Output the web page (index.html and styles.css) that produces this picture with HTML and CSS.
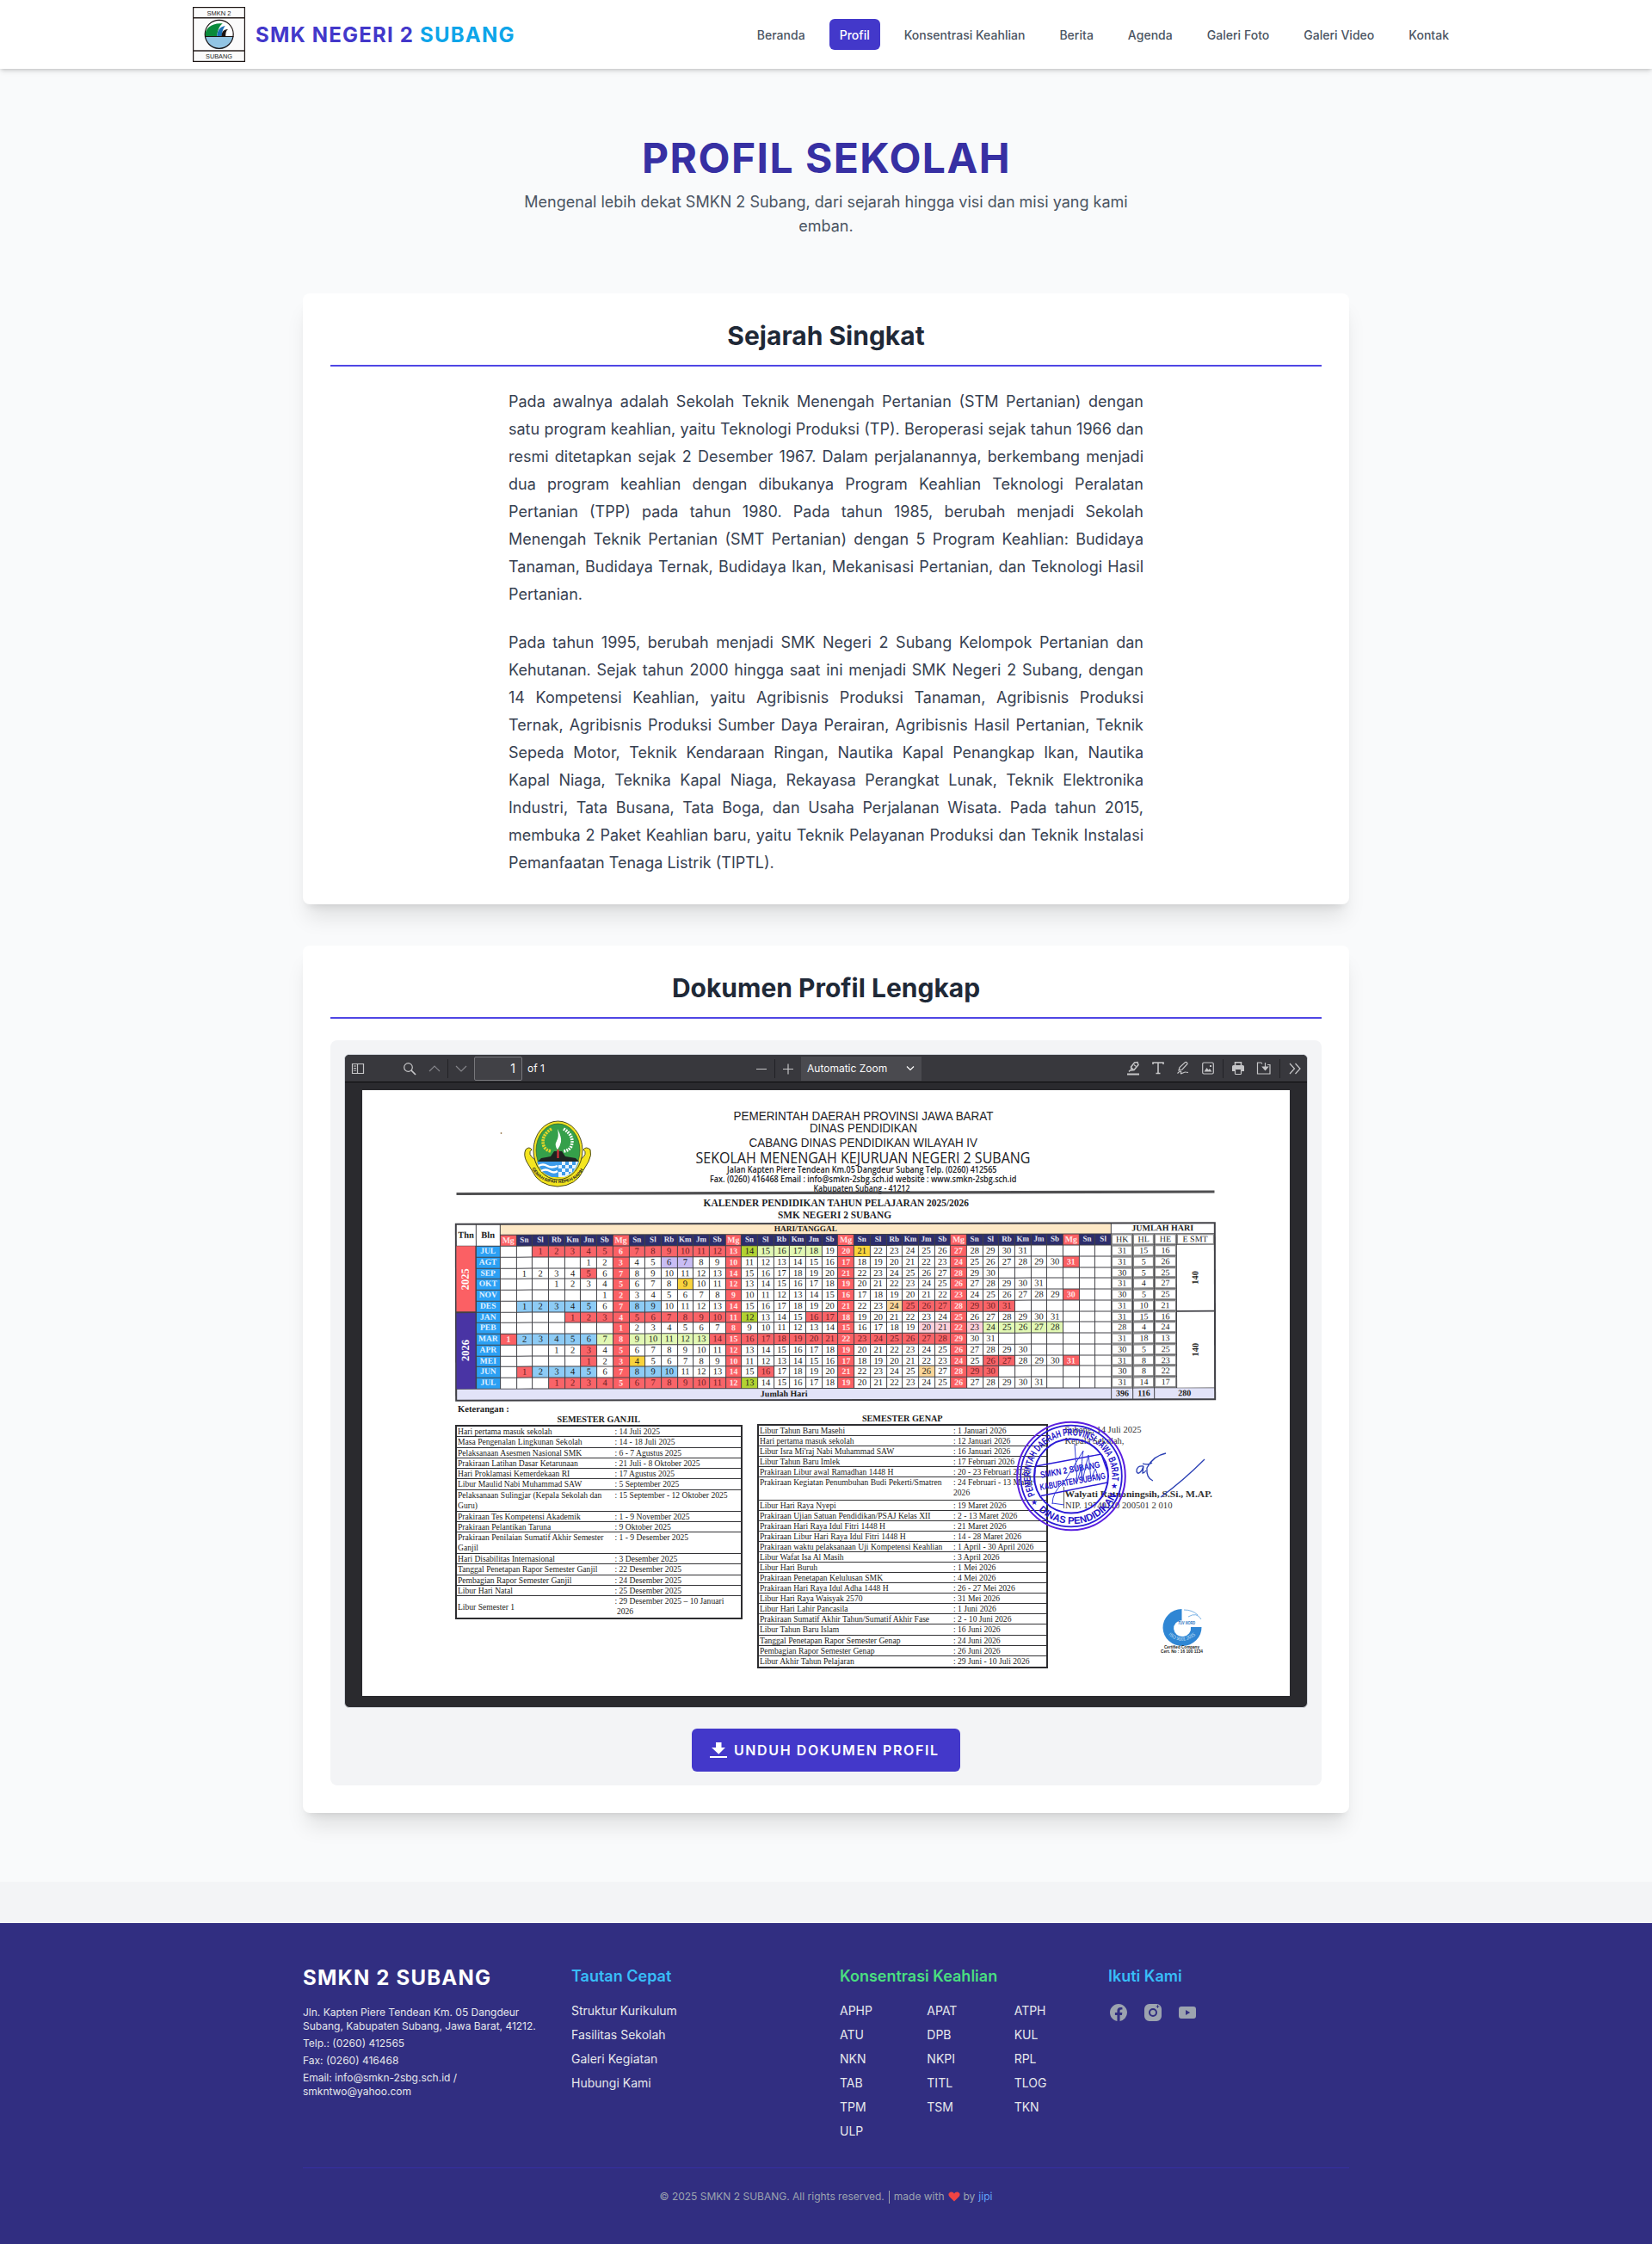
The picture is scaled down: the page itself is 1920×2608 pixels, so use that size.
FILE: index.html
```html
<!DOCTYPE html>
<html lang="id">
<head>
<meta charset="utf-8">
<title>Profil Sekolah - SMK Negeri 2 Subang</title>
<link rel="stylesheet" href="styles.css">
</head>
<body>
<header class="site-header">
  <div class="header-inner">
    <a class="brand">
      <svg class="brand-logo" viewBox="0 0 61 64">
        <rect x=".6" y=".6" width="59.8" height="62.8" fill="#fbfbfb" stroke="#1c1413" stroke-width="1.2"/>
        <path d="M0 12.8H61M0 51H61" stroke="#2a2220" stroke-width="1.4"/>
        <circle cx="30.7" cy="31.8" r="16.5" fill="#fff"/>
        <path d="M14.3 34.5a16.5 16.5 0 0 0 32.8 0z" fill="#92c5e4"/>
        <path d="M14.3 34.5c-.6-9 7-16 20.5-15.2-4 3-6.4 8.500-6.600 15.200z" fill="#0a8a3a"/>
        <path d="M28.200 34.500c.1-6 2.500-11.500 9.500-12.500-2.500 3-3.800 7.500-4 12.500z" fill="#1b6fb4"/>
        <path d="M33.500 34.500c.2-5 1.500-8.500 7.500-8.600-2.500 1.700-2.800 5-2.800 8.600z" fill="#1c1413"/>
        <path d="M14 34.500H47.400" stroke="#1c1413" stroke-width="1"/>
        <circle cx="30.700" cy="31.800" r="16.500" fill="none" stroke="#1c1413" stroke-width="1.200"/>
        <text x="30.500" y="10" text-anchor="middle" textLength="28" lengthAdjust="spacingAndGlyphs">SMKN 2</text>
        <text x="30.500" y="60" text-anchor="middle" textLength="31" lengthAdjust="spacingAndGlyphs">SUBANG</text>
      </svg>
      <span class="brand-name">SMK NEGERI 2 <span class="accent">SUBANG</span></span>
    </a>
    <nav class="main-nav">
      <a>Beranda</a><a class="active">Profil</a><a>Konsentrasi Keahlian</a><a>Berita</a><a>Agenda</a><a>Galeri Foto</a><a>Galeri Video</a><a>Kontak</a>
    </nav>
  </div>
</header>

<main class="page">
  <div class="hero">
    <h1>PROFIL SEKOLAH</h1>
    <p>Mengenal lebih dekat SMKN 2 Subang, dari sejarah hingga visi dan misi yang kami emban.</p>
  </div>

  <section class="card">
    <h2>Sejarah Singkat</h2>
    <div class="prose">
      <p>Pada awalnya adalah Sekolah Teknik Menengah Pertanian (STM Pertanian) dengan satu program keahlian, yaitu Teknologi Produksi (TP). Beroperasi sejak tahun 1966 dan resmi ditetapkan sejak 2 Desember 1967. Dalam perjalanannya, berkembang menjadi dua program keahlian dengan dibukanya Program Keahlian Teknologi Peralatan Pertanian (TPP) pada tahun 1980. Pada tahun 1985, berubah menjadi Sekolah Menengah Teknik Pertanian (SMT Pertanian) dengan 5 Program Keahlian: Budidaya Tanaman, Budidaya Ternak, Budidaya Ikan, Mekanisasi Pertanian, dan Teknologi Hasil Pertanian.</p>
      <p>Pada tahun 1995, berubah menjadi SMK Negeri 2 Subang Kelompok Pertanian dan Kehutanan. Sejak tahun 2000 hingga saat ini menjadi SMK Negeri 2 Subang, dengan 14 Kompetensi Keahlian, yaitu Agribisnis Produksi Tanaman, Agribisnis Produksi Ternak, Agribisnis Produksi Sumber Daya Perairan, Agribisnis Hasil Pertanian, Teknik Sepeda Motor, Teknik Kendaraan Ringan, Nautika Kapal Penangkap Ikan, Nautika Kapal Niaga, Teknika Kapal Niaga, Rekayasa Perangkat Lunak, Teknik Elektronika Industri, Tata Busana, Tata Boga, dan Usaha Perjalanan Wisata. Pada tahun 2015, membuka 2 Paket Keahlian baru, yaitu Teknik Pelayanan Produksi dan Teknik Instalasi Pemanfaatan Tenaga Listrik (TIPTL).</p>
    </div>
  </section>

  <section class="card">
    <h2>Dokumen Profil Lengkap</h2>
    <div class="document-box">
      <div class="viewer">
        <div class="toolbar">
          <div class="tools">
            <svg class="ic" width="16" height="16"><path d="M1.500 2.500h13v11h-13zM7.500 2.500v11" /><path d="M3 5h3M3 7.500h3M3 10h3"/></svg>
            <svg class="ic gap-search" width="16" height="16"><circle cx="6.500" cy="6.500" r="4.800"/><path d="M10 10l5 5" stroke-width="1.700"/></svg>
            <svg class="ic dim gap-s" width="14" height="16"><path d="M1 11l6-6 6 6"/></svg>
            <i class="sep"></i>
            <svg class="ic dim" width="14" height="16"><path d="M1 5l6 6 6-6"/></svg>
            <span class="page-input">1</span>
            <span class="page-total">of 1</span>
          </div>
          <div class="tools">
            <svg class="ic" width="14" height="16"><path d="M1 8.500h12"/></svg>
            <i class="sep"></i>
            <svg class="ic" width="14" height="16"><path d="M1 8.500h12M7 2.500v12"/></svg>
            <span class="zoom-select">Automatic Zoom<svg class="ic light" width="10" height="8"><path d="M1 1.500l4 4 4-4"/></svg></span>
          </div>
          <div class="tools right">
            <svg class="ic" width="16" height="17"><path d="M1 15.500h14" stroke-width="2"/><path d="M5 10.500l-2 2M5.500 7l4-5 3.500-.5 1 3-5 6-3 .5z" stroke-width="1.500"/><path d="M5.500 7.500l3 2.800M9 4.500l2.500 2"/></svg>
            <svg class="ic" width="16" height="17"><path d="M2 4V2h12v2M8 2v12.500M5.500 14.500h5" stroke-width="1.600"/></svg>
            <svg class="ic" width="16" height="17"><path d="M3 11l1-3.500L10.500 1.500q2.500-.5 2.500 2L7 10zM1.500 14.500c3-3 5-3 4-.5s4-1.500 5.500-1l3 .5"/></svg>
            <svg class="ic" width="16" height="17"><rect x="1.700" y="2" width="12.600" height="13" rx="1.500"/><path d="M3.500 12.500l3-4.500 2 2.500 1.500-1.500 2.500 3.500z" fill="#c6c6c8" stroke="none"/><rect x="10" y="5" width="2" height="2" fill="#c6c6c8" stroke="none"/></svg>
            <i class="sep"></i>
            <svg class="ic" width="16" height="17"><path d="M4.500 5V1.800h7V5" stroke-width="1.500"/><path d="M1 6.500Q1 5 2.500 5h11Q15 5 15 6.500V12h-3V9.500H4V12H1z" fill="#c6c6c8" stroke="none"/><rect x="4.500" y="9.500" width="7" height="6" rx=".8"/></svg>
            <svg class="ic" width="18" height="17"><path d="M7 3.500L5.800 2H1.500v13h14.500V4.500H13" /><path d="M10.500 2v7M7.500 7l3 3.500 3-3.500z" fill="#c6c6c8"/></svg>
            <i class="sep"></i>
            <svg class="ic" width="16" height="16"><path d="M2 2l5.500 6L2 14M8.500 2l5.500 6-5.500 6"/></svg>
          </div>
        </div>

        <div class="sheet">
          <svg class="letterhead" viewBox="421 1267 1078 155">
            <circle cx="582.500" cy="1317" r=".9" fill="#9a7b52"/>
            <g class="emblem">
              <path d="M611 1336q-3 6 1 14l6 10q8 18 30 19 22-1 30-19l6-10q4-8 2-14-5-4-8 0 6 5-4 12l-2 6q-8 16-24 16t-24-16l-2-6q-10-7-4-12-3-4-7 0z" fill="#f4e51f" stroke="#3b3a12" stroke-width=".9"/>
              <ellipse cx="648.500" cy="1337" rx="28.500" ry="34" fill="#f3e427" stroke="#3b3a12" stroke-width=".9"/>
              <ellipse cx="648.500" cy="1337" rx="25.500" ry="31" fill="#35a04a" stroke="#2c5a2a" stroke-width=".7"/>
              <path d="M624 1350h49q-4 14-17 18h-15q-13-4-17-18z" fill="#3d9be9"/>
              <path d="M626 1355q5-3 10 0t12 0M629 1361q5-3 10 0t9 0" stroke="#fff" stroke-width="2.400" fill="none"/>
              <path d="M649 1350h23l-2 5-3 6-5 4-6 3h-7z" fill="#e8f4ff"/>
              <path d="M649 1350h4v4h-4zM657 1350h4v4h-4zM665 1350h4v4h-4zM653 1354h4v4h-4zM661 1354h4v4h-4zM649 1358h4v4h-4zM657 1358h4v4h-4zM665 1358h3l-2 4h-1zM653 1362h4v4h-4zM661 1362h3l-3 3z" fill="#3d9be9"/>
              <path d="M625 1350l4-4 6-1 5-1 4-6 9 0 4 6 6 1 6 1 4 4z" fill="#1e2321"/>
              <path d="M648.500 1346v-10" stroke="#d9303a" stroke-width="2.200"/>
              <path d="M648 1336q-4-5-1-10t1-14q5 10 4 15t-4 9z" fill="#fff"/>
              <path d="M641 1312q-13 8-9 20 2 5 9 6" fill="none" stroke="#e5d62a" stroke-width="3.600" stroke-dasharray="2.200 1"/>
              <path d="M655 1312q13 8 9 20-2 5-9 6" fill="none" stroke="#fff" stroke-width="3.600" stroke-dasharray="1.800 1.200"/>
              <path id="ribbon" d="M617 1355q8 20 31.500 20t31.500-20" fill="none"/>
              <text class="ribbon-text"><textPath href="#ribbon" startOffset="3" textLength="72" lengthAdjust="spacingAndGlyphs">GEMAH RIPAH REPEH RAPIH</textPath></text>
            </g>
            <g class="lh-sans">
              <text x="852.500" y="1301.500" textLength="302" lengthAdjust="spacingAndGlyphs">PEMERINTAH DAERAH PROVINSI JAWA BARAT</text>
              <text x="941" y="1316" textLength="125" lengthAdjust="spacingAndGlyphs">DINAS PENDIDIKAN</text>
              <text x="870.500" y="1332.500" textLength="265.500" lengthAdjust="spacingAndGlyphs">CABANG DINAS PENDIDIKAN WILAYAH IV</text>
            </g>
            <g class="lh-open">
              <text class="lh-school" x="808.500" y="1352" textLength="389" lengthAdjust="spacingAndGlyphs">SEKOLAH MENENGAH KEJURUAN NEGERI 2 SUBANG</text>
              <text x="845" y="1363" textLength="313.500" lengthAdjust="spacingAndGlyphs">Jalan Kapten Piere Tendean Km.05 Dangdeur Subang Telp. (0260) 412565</text>
              <text x="825" y="1374" textLength="356.500" lengthAdjust="spacingAndGlyphs">Fax. (0260) 416468 Email : info@smkn-2sbg.sch.id website : www.smkn-2sbg.sch.id</text>
              <text x="945.500" y="1384.500" textLength="112" lengthAdjust="spacingAndGlyphs">Kabupaten Subang - 41212</text>
            </g>
            <path d="M530.500 1387.500L1411.500 1385" stroke="#505052" stroke-width="3.200"/>
            <g class="lh-serif">
              <text x="817.500" y="1402" textLength="308.500" lengthAdjust="spacingAndGlyphs">KALENDER PENDIDIKAN TAHUN PELAJARAN 2025/2026</text>
              <text x="904" y="1415.500" textLength="132" lengthAdjust="spacingAndGlyphs">SMK NEGERI 2 SUBANG</text>
            </g>
          </svg>

          <div class="calendar" id="calendar"></div>

          <div class="notes">
            <div class="notes-col odd">
              <p class="notes-label">Keterangan :</p>
              <h4>SEMESTER GANJIL</h4>
              <div class="agenda" id="odd"></div>
            </div>
            <div class="notes-col even">
              <h4>SEMESTER GENAP</h4>
              <div class="agenda" id="even"></div>
            </div>
          </div>

          <svg class="signature" viewBox="1160 1640 280 300">
            <g class="sign-text">
              <text x="1237.500" y="1665" textLength="89" lengthAdjust="spacingAndGlyphs">Subang, 14 Juli 2025</text>
              <text x="1237.500" y="1678" textLength="69" lengthAdjust="spacingAndGlyphs">Kepala Sekolah,</text>
              <text x="1237.500" y="1739.500" class="sign-name" textLength="171.500" lengthAdjust="spacingAndGlyphs">Walyati Ratnoningsih, S.Si., M.AP.</text>
              <text x="1238" y="1752.500" textLength="124.500" lengthAdjust="spacingAndGlyphs">NIP. 19740110 200501 2 010</text>
              <path d="M1236.500 1728v25" stroke="#333" stroke-width=".8"/>
            </g>
            <g class="stamp">
              <circle cx="1245" cy="1715.500" r="62.800" stroke="#5a1fe0" stroke-width="2"/>
              <circle cx="1245" cy="1715.500" r="58.800" stroke-width="1.800"/>
              <circle cx="1245" cy="1715.500" r="43" stroke-width="2"/>
              <path d="M1204 1704l76-14M1210 1738.500l77-15.500M1203 1708l-1 15M1280 1690l7 20"/>
              <path id="arc-top" d="M1204 1739A47.300 47.300 0 1 1 1291 1727" stroke="none"/>
              <path id="arc-bottom" d="M1205 1753A56 56 0 0 0 1299 1734" stroke="none"/>
              <text class="stamp-ring"><textPath href="#arc-top" startOffset="2" textLength="176" lengthAdjust="spacingAndGlyphs">PEMERINTAH DAERAH PROVINSI JAWA BARAT</textPath></text>
              <text class="stamp-ring"><textPath href="#arc-bottom" startOffset="3" textLength="108" lengthAdjust="spacingAndGlyphs">DINAS PENDIDIKAN</textPath></text>
              <text class="stamp-star" x="1198" y="1749">★</text>
              <text class="stamp-star" x="1291" y="1730">★</text>
              <g transform="rotate(-10 1245 1715.500)">
                <text class="stamp-mid" x="1210" y="1711.500" textLength="70" lengthAdjust="spacingAndGlyphs">SMKN 2 SUBANG</text>
                <text class="stamp-mid" x="1207" y="1725.500" textLength="77" lengthAdjust="spacingAndGlyphs">KABUPATEN SUBANG</text>
              </g>
              <path d="M1223 1748q0-14 14-26l22-36q-2 8-2 33M1249 1678l3 44 5-18 1 17 7-30 3 28 5-12 5 14M1223 1747l14 2" stroke="#3540d8" stroke-width="1"/>
              <path d="M1329 1704q-8-1-8 6 1 5 6-1l2-5-1 8q2 0 4-3M1355 1689q-15 3-22 17-1 12 7 15M1328 1701q7 2 11-1M1349 1740q26-19 51-44" stroke="#2a3fb4" stroke-width="1.300"/>
            </g>
            <g>
              <path d="M1373.500 1870A22.500 21.500 0 1 0 1396.500 1891L1384 1891A10 9.500 0 1 1 1373.500 1883Z" fill="#2f86d4"/>
              <path d="M1381 1879q10-6 15 3M1376 1871q10 0 16 6" fill="none" stroke="#5aa0de" stroke-width=".8"/>
              <text class="cert-name" x="1369" y="1887.500" textLength="20" lengthAdjust="spacingAndGlyphs">TÜV NORD</text>
              <path id="iso" d="M1358 1900q16 14 33-1" fill="none"/>
              <text class="cert-iso"><textPath href="#iso" textLength="35" lengthAdjust="spacingAndGlyphs">ISO 9001:2015</textPath></text>
              <text class="cert" x="1353" y="1916" textLength="41" lengthAdjust="spacingAndGlyphs">Certified Company</text>
              <text class="cert" x="1349" y="1920.800" textLength="49" lengthAdjust="spacingAndGlyphs">Cert. No : 16 100 1134</text>
            </g>
          </svg>
        </div>
      </div>
      <a class="download">
        <svg width="20" height="18"><path d="M7 0h6.500v6H18l-7.750 7.700L2 6h5zM0 16h20v2H0z" fill="#fff"/></svg>
        UNDUH DOKUMEN PROFIL
      </a>
    </div>
  </section>
</main>

<footer class="site-footer">
  <div class="footer-inner">
    <div class="footer-grid">
      <div>
        <h3 class="footer-brand">SMKN 2 SUBANG</h3>
        <address>
          <p>Jln. Kapten Piere Tendean Km. 05 Dangdeur Subang, Kabupaten Subang, Jawa Barat, 41212.</p>
          <p>Telp.: (0260) 412565</p>
          <p>Fax: (0260) 416468</p>
          <p>Email: info@smkn-2sbg.sch.id / smkntwo@yahoo.com</p>
        </address>
      </div>
      <div>
        <h4 class="sky">Tautan Cepat</h4>
        <div class="links"><a>Struktur Kurikulum</a><a>Fasilitas Sekolah</a><a>Galeri Kegiatan</a><a>Hubungi Kami</a></div>
      </div>
      <div>
        <h4 class="green">Konsentrasi Keahlian</h4>
        <div class="links three"><a>APHP</a><a>APAT</a><a>ATPH</a><a>ATU</a><a>DPB</a><a>KUL</a><a>NKN</a><a>NKPI</a><a>RPL</a><a>TAB</a><a>TITL</a><a>TLOG</a><a>TPM</a><a>TSM</a><a>TKN</a><a>ULP</a></div>
      </div>
      <div>
        <h4 class="sky">Ikuti Kami</h4>
        <div class="social">
          <svg viewBox="0 0 24 24"><path d="M12 2.040C6.500 2.040 2 6.530 2 12.060C2 17.060 5.660 21.210 10.440 21.960V14.960H7.900V12.060H10.440V9.850C10.440 7.340 11.930 5.960 14.220 5.960C15.310 5.960 16.450 6.150 16.450 6.150V8.620H15.190C13.950 8.620 13.560 9.390 13.560 10.180V12.060H16.340L15.890 14.960H13.560V21.960A10 10 0 0 0 22 12.060C22 6.530 17.500 2.040 12 2.040Z"/></svg>
          <svg viewBox="0 0 24 24"><path fill-rule="evenodd" d="M7.800 2h8.400A5.800 5.800 0 0 1 22 7.800v8.400a5.800 5.800 0 0 1-5.800 5.800H7.800A5.800 5.800 0 0 1 2 16.200V7.800A5.800 5.800 0 0 1 7.800 2zM12 7a5 5 0 1 0 0 10 5 5 0 0 0 0-10zM12 9a3 3 0 1 1 0 6 3 3 0 0 1 0-6zM17 3.200v1.300h-1.300v1H17v1.300h1V5.500h1.300v-1H18V3.200z"/></svg>
          <svg viewBox="0 0 24 24"><path fill-rule="evenodd" d="M5 5h14a3 3 0 0 1 3 3v8a3 3 0 0 1-3 3H5a3 3 0 0 1-3-3V8a3 3 0 0 1 3-3zM10 9v6l5.200-3z"/></svg>
        </div>
      </div>
    </div>
    <div class="copyright">© 2025 SMKN 2 SUBANG. All rights reserved. <span class="bar"></span> made with <svg width="14" height="12" viewBox="0 0 14 12"><path d="M7 11.500L1.500 6C-.8 3.400 1 .5 3.700.5 5.200.5 6.300 1.300 7 2.400 7.700 1.300 8.800.5 10.300.5 13 .5 14.800 3.400 12.500 6z" fill="#ef4444"/></svg> by <a>jipi</a></div>
  </div>
</footer>
<script src="calendar.js"></script>
</body>
</html>
```
FILE: styles.css
```css
* { box-sizing: border-box; }
body { margin: 0; background: #f3f4f6; font-family: Inter, sans-serif; font-size: 16px; line-height: 24px; color: #1f2937; }
h1, h2, h3, h4, p { margin: 0; }
svg { display: block; flex: none; }

.site-header { position: relative; z-index: 1; height: 80px; background: #fff; box-shadow: 0 4px 6px -1px rgba(0,0,0,.1), 0 2px 4px -2px rgba(0,0,0,.1), 0 0 5px rgba(0,0,0,.12); }
.header-inner { width: 1472px; height: 80px; margin: 0 auto; display: flex; align-items: center; justify-content: space-between; }
.brand { display: flex; align-items: center; gap: 12px; }
.brand-logo { width: 61px; height: 64px; }
.brand-logo text { font: 7.500px "Liberation Sans", sans-serif; fill: #222; }
.brand-name { padding-top: 2px; font-size: 24px; line-height: 32px; font-weight: 700; letter-spacing: 1.200px; color: #4338ca; }
.brand-name .accent { color: #0ea5e9; }
.main-nav { display: flex; gap: 16px; }
.main-nav a { padding: 9px 12px 7px; border-radius: 6px; font-size: 14px; line-height: 20px; font-weight: 500; letter-spacing: .02px; color: #4b5563; }
.main-nav .active { background: #4338ca; color: #fff; }

.page { padding: 80px 352px; background: #f9fafb; display: flex; flex-direction: column; }
.hero { width: 768px; margin: 0 auto 63.500px; text-align: center; }
.hero h1 { font-size: 48px; line-height: 48px; font-weight: 700; letter-spacing: 1.440px; color: #3730a3; padding-left: 1px; }
.hero p { margin-top: 13px; font-size: 18px; line-height: 28px; color: #4b5563; padding: 0 20px; }
.card { background: #fff; border-radius: 8px; padding: 32px; box-shadow: 0 20px 25px -5px rgba(0,0,0,.1), 0 8px 10px -6px rgba(0,0,0,.1); }
.card + .card { margin-top: 48px; }
.card h2 { font-size: 30px; line-height: 36px; font-weight: 700; text-align: center; padding-bottom: 16px; border-bottom: 2px solid #4f46e5; margin: -.5px 0 24.500px; }
.prose { width: 738px; margin: 0 auto; font-size: 18px; line-height: 32px; color: #374151; text-align: justify; }
.prose p + p { margin-top: 24px; }

.document-box { background: #f3f4f6; border-radius: 8px; padding: 16px; display: flex; flex-direction: column; align-items: center; gap: 24px; }
.viewer { width: 1120px; height: 760px; border: 1px solid #d1d5db; border-radius: 6px; overflow: hidden; background: #2a2a2e; }
.toolbar { height: 32px; background: #38383d; border-bottom: 1px solid #0c0c0d; display: grid; grid-template-columns: 477px 431px 1fr; align-items: center; color: #f9f9fa; font-size: 12px; }
.tools { display: flex; align-items: center; height: 32px; }
.tools:first-child { padding-left: 7px; }
.tools.right { justify-content: flex-end; gap: 13px; padding-right: 7px; }
.tools .sep { width: 1px; height: 22px; background: #222226; margin: 0 8px; }
.tools.right .sep { margin: 0 -4px; }
.ic { fill: none; stroke: #c6c6c8; stroke-width: 1.200; }
.ic.dim { stroke: #85858a; }
.ic.light { stroke: #fff; }
.gap-search { margin-left: 44px; }
.gap-s { margin-left: 14px; }
.page-input { width: 56px; height: 28px; margin-left: 8px; border: 1px solid #77777b; border-radius: 2px; background: #414146; text-align: right; padding-right: 7px; line-height: 26px; font-size: 14px; }
.page-total { margin-left: 6px; }
.zoom-select { display: flex; align-items: center; justify-content: space-between; width: 140px; height: 28px; margin-left: 8px; padding: 0 8px 0 7px; background: #4a4a4f; }

.sheet { position: relative; width: 1078px; height: 704px; margin: 9px auto 0; background: #fff; color: #1c1c20; }
.letterhead { width: 1078px; height: 155px; }
.letterhead text { fill: #222226; }
.letterhead .ribbon-text { font: bold 5px "Liberation Sans", sans-serif; }
.lh-sans { font: 14px "Liberation Sans", sans-serif; }
.lh-open { font: 600 9.800px "Open Sans", sans-serif; }
.lh-open .lh-school { font-size: 17.500px; font-weight: 500; }
.lh-serif { font: bold 11.500px "Liberation Serif", serif; }

.calendar { width: 883.700px; height: 206.700px; margin: -1px 0 1px 108px; padding: 2px; background: #404046; display: grid; gap: 1px; transform: rotate(-.1deg);
  grid-template-columns: 21.500px 27.500px repeat(38, 17.690px) 24.300px 24px 24.300px 1fr; grid-template-rows: 10.700px 12.300px repeat(13, 11.780px) 1fr;
  font: 10.500px/11.800px "Liberation Serif", serif; text-align: center; }
.calendar > div { background: #fff; overflow: hidden; white-space: nowrap; min-width: 0; min-height: 0; }
.calendar .bold { font-weight: bold; font-size: 10px; line-height: 10.700px; }
.calendar .wd { background: #2d2e6b; color: #e4e4f0; font-weight: bold; font-size: 9px; }
.calendar .sun { background: #fb6064; color: #ffe4e4; font-weight: bold; font-size: 9.800px; }
.calendar .month { background: #2ba0f4; color: #e2f2ff; font-weight: bold; font-size: 9.500px; }
.calendar .title { background: #fde8c6; font-weight: bold; font-size: 9.300px; line-height: 10.500px; }
.calendar .total { background: #e2e3f8; font-weight: bold; font-size: 10px; line-height: 11px; }
.calendar .y2025, .calendar .y2026, .calendar .half { writing-mode: vertical-rl; transform: rotate(180deg); font-weight: bold; display: flex; align-items: center; justify-content: center; }
.calendar .y2025 { background: #fb6064; color: #fff; font-size: 12.500px; }
.calendar .y2026 { background: #4934a4; color: #fff; font-size: 12.500px; }
.calendar .mid { display: flex; align-items: center; justify-content: center; font-weight: bold; }
.calendar .sum { border: .500px solid #777; line-height: 10.800px; font-size: 10px; }
.calendar .r { background: #f96468; color: #6b1f24; }
.calendar .b { background: #8dcbf5; }
.calendar .g { background: #b2d233; }
.calendar .l { background: #e2f8b4; }
.calendar .y { background: #f9d33c; }
.calendar .v { background: #c9bdf4; }
.calendar .o { background: #fbd699; }
.calendar .p { background: #fcd0da; }

.notes { display: flex; padding-left: 108px; font: 9.600px/12px "Liberation Serif", serif; }
.notes h4 { font-size: 10.200px; font-weight: bold; text-align: center; line-height: 12px; white-space: nowrap; }
.notes-label { padding-left: 3px; font-weight: bold; font-size: 10.600px; line-height: 12px; margin-top: 4px; }
.odd { width: 333.500px; }
.even { width: 337.500px; margin-left: 17.500px; padding-top: 14.500px; }
.agenda { border: 2px solid #2d2d30; display: flex; flex-direction: column; }
.agenda div { display: grid; border-bottom: 1px solid #333336; padding-left: 1px; }
.agenda div:last-child { border-bottom: 0; }
.odd .agenda div { grid-template-columns: 182.500px 1fr; height: 12.250px; }
.odd .agenda .tall { height: 25px; }
.even .agenda div { grid-template-columns: 225px 1fr; height: 12.070px; }
.even .agenda .tall { height: 26.700px; }
.agenda span { white-space: pre; line-height: 12px; }
.agenda .tall .center { align-self: center; }

.signature { position: absolute; left: 739px; top: 373px; width: 280px; height: 300px; }
.sign-text { font: 10.300px "Liberation Serif", serif; fill: #333; }
.sign-name { font-size: 11.300px; font-weight: bold; }
.stamp { fill: none; stroke: #2b1bd6; stroke-width: 1.400; }
.stamp text { fill: #2413c8; stroke: none; font-family: "Liberation Sans", sans-serif; font-weight: bold; }
.stamp .stamp-ring { font-size: 11.500px; }
.stamp .stamp-mid { font-size: 10.500px; }
.stamp .stamp-star { font-family: "DejaVu Sans", sans-serif; font-size: 9px; }
.cert { font: bold 4.500px "Liberation Sans", sans-serif; fill: #222; }
.cert-iso { font: 5.500px "Liberation Sans", sans-serif; fill: #cfe4f7; }
.cert-name { font: italic bold 5px "Liberation Sans", sans-serif; fill: #1f6fc0; }

.download { display: flex; align-items: center; gap: 8px; width: 312px; height: 50px; padding-left: 21px; border-radius: 6px; background: #4338ca; color: #fff; font-weight: 600; letter-spacing: 1.600px; white-space: nowrap; }

.site-footer { margin-top: 48px; height: 373.500px; padding-top: 48.500px; background: #312e81; }
.footer-inner { width: 1216px; margin: 0 auto; }
.footer-grid { display: grid; grid-template-columns: repeat(4, 280px); gap: 32px; height: 236px; }
.footer-brand { font-size: 24px; line-height: 32px; font-weight: 700; letter-spacing: 1.200px; color: #fff; margin-bottom: 16px; }
address { font-style: normal; font-size: 12px; line-height: 16px; color: #e5e7eb; display: flex; flex-direction: column; gap: 4px; }
.footer-grid h4 { font-size: 18px; line-height: 28px; font-weight: 600; margin-bottom: 16px; }
.sky { color: #38bdf8; }
.green { color: #4ade80; }
.links { display: grid; gap: 8px; font-size: 14px; line-height: 20px; color: #e5e7eb; }
.links.three { grid-template-columns: repeat(3, 1fr); column-gap: 24px; }
.social { display: flex; gap: 16px; }
.social svg { width: 24px; height: 24px; fill: #9ca3af; }
.copyright { border-top: 1px solid #3730a3; padding-top: 24px; display: flex; justify-content: center; align-items: center; gap: 4px; font-size: 12px; line-height: 18px; color: #9ca3af; }
.copyright .bar { width: 1px; height: 15px; background: #9ca3af; margin: 0 1px; }
.copyright a { color: #60a5fa; }
```
FILE: calendar.js
```js
// Month rows: label, weekday column of day 1, number of days, coloured days, totals (HK, HL, HE)
const months = [
  ['JUL', 2, 31, 'r1-5,r7-12,g14,l15-18,y21', 31, 15, 16],
  ['AGT', 5, 31, 'v6-7', 31, 5, 26],
  ['SEP', 1, 30, 'r5', 30, 5, 25],
  ['OKT', 3, 31, 'y9', 31, 4, 27],
  ['NOV', 6, 30, '', 30, 5, 25],
  ['DES', 1, 31, 'b1-5,b8-9,o24,r25-27,r29-31', 31, 10, 21],
  ['JAN', 4, 31, 'r1-3,r5-10,g12,r16-17', 31, 15, 16],
  ['PEB', 7, 28, 'p20-21,p23,l24-28', 28, 4, 24],
  ['MAR', 0, 31, 'b2-6,l7,l9-13,r14,r16-21,r23-28', 31, 18, 13],
  ['APR', 3, 30, 'r3', 30, 5, 25],
  ['MEI', 5, 31, 'r1,y4,r26-27', 31, 8, 23],
  ['JUN', 1, 30, 'r1,b2-5,b8-10,r16,o26,r29-30', 30, 8, 22],
  ['JUL', 3, 31, 'r1-4,r6-11,g13', 31, 14, 17]
];
const weekdays = ['Mg', 'Sn', 'Sl', 'Rb', 'Km', 'Jm', 'Sb'];
const grid = document.getElementById('calendar');

function cell(text, cls, row, col, rowSpan = 1, colSpan = 1) {
  const el = document.createElement('div');
  el.textContent = text;
  el.className = cls;
  el.style.gridArea = `${row} / ${col} / span ${rowSpan} / span ${colSpan}`;
  grid.append(el);
}

cell('Thn', 'mid', 1, 1, 2);
cell('Bln', 'mid', 1, 2, 2);
cell('HARI/TANGGAL', 'title', 1, 3, 1, 38);
cell('JUMLAH HARI', 'bold', 1, 41, 1, 4);
for (let i = 0; i < 38; i++) cell(weekdays[i % 7], i % 7 ? 'wd' : 'sun', 2, i + 3);
['HK', 'HL', 'HE', 'E SMT'].forEach((t, i) => cell(t, 'sum', 2, 41 + i));
cell('2025', 'y2025', 3, 1, 6);
cell('2026', 'y2026', 9, 1, 7);

months.forEach(([name, start, days, marks, ...sums], m) => {
  const colours = {};
  marks.split(',').filter(Boolean).forEach(mark => {
    const [from, to = from] = mark.slice(1).split('-').map(Number);
    for (let d = from; d <= to; d++) colours[d] = mark[0];
  });
  cell(name, 'month', m + 3, 2);
  for (let i = 0; i < 38; i++) {
    const day = i - start + 1;
    const valid = day > 0 && day <= days;
    cell(valid ? day : '', valid ? (i % 7 ? colours[day] || '' : 'sun') : '', m + 3, i + 3);
  }
  sums.forEach((n, i) => cell(n, 'sum', m + 3, 41 + i));
});
cell('140', 'half', 3, 44, 6);
cell('140', 'half', 9, 44, 7);
cell('Jumlah Hari', 'total', 16, 1, 1, 40);
cell('396', 'total', 16, 41);
cell('116', 'total', 16, 42);
cell('280', 'total', 16, 43, 1, 2);

const agendas = {
  odd: [
    ['Hari pertama masuk sekolah', '14 Juli 2025'],
    ['Masa Pengenalan Lingkunan Sekolah', '14 - 18 Juli 2025'],
    ['Pelaksanaan Asesmen Nasional SMK', '6 - 7 Agustus 2025'],
    ['Prakiraan Latihan Dasar Ketarunaan', '21 Juli - 8 Oktober 2025'],
    ['Hari Proklamasi Kemerdekaan RI', '17 Agustus 2025'],
    ['Libur Maulid Nabi Muhammad SAW', '5 September 2025'],
    ['Pelaksanaan Sulingjar (Kepala Sekolah dan\nGuru)', '15 September - 12 Oktober 2025'],
    ['Prakiraan Tes Kompetensi Akademik', '1 - 9 November 2025'],
    ['Prakiraan Pelantikan Taruna', '9 Oktober 2025'],
    ['Prakiraan Penilaian Sumatif Akhir Semester\nGanjil', '1 - 9 Desember 2025'],
    ['Hari Disabilitas Internasional', '3 Desember 2025'],
    ['Tanggal Penetapan Rapor Semester Ganjil', '22 Desember 2025'],
    ['Pembagian Rapor Semester Ganjil', '24 Desember 2025'],
    ['Libur Hari Natal', '25 Desember 2025'],
    ['Libur Semester 1', '29 Desember 2025 – 10 Januari\n 2026']
  ],
  even: [
    ['Libur Tahun Baru Masehi', '1 Januari 2026'],
    ['Hari pertama masuk sekolah', '12 Januari 2026'],
    ["Libur Isra Mi'raj Nabi Muhammad SAW", '16 Januari 2026'],
    ['Libur Tahun Baru Imlek', '17 Februari 2026'],
    ['Prakiraan Libur awal Ramadhan 1448 H', '20 - 23 Februari 2026'],
    ['Prakiraan Kegiatan Penumbuhan Budi Pekerti/Smatren', '24 Februari - 13 Maret\n2026'],
    ['Libur Hari Raya Nyepi', '19 Maret 2026'],
    ['Prakiraan Ujian Satuan Pendidikan/PSAJ Kelas XII', '2 - 13 Maret 2026'],
    ['Prakiraan Hari Raya Idul Fitri 1448 H', '21 Maret 2026'],
    ['Prakiraan Libur Hari Raya Idul Fitri 1448 H', '14 - 28 Maret 2026'],
    ['Prakiraan waktu pelaksanaan Uji Kompetensi Keahlian', '1 April - 30 April 2026'],
    ['Libur Wafat Isa Al Masih', '3 April 2026'],
    ['Libur Hari Buruh', '1 Mei 2026'],
    ['Prakiraan Penetapan Kelulusan SMK', '4 Mei 2026'],
    ['Prakiraan Hari Raya Idul Adha 1448 H', '26 - 27 Mei 2026'],
    ['Libur Hari Raya Waisyak 2570', '31 Mei 2026'],
    ['Libur Hari Lahir Pancasila', '1 Juni 2026'],
    ['Prakiraan Sumatif Akhir Tahun/Sumatif Akhir Fase', '2 - 10 Juni 2026'],
    ['Libur Tahun Baru Islam', '16 Juni 2026'],
    ['Tanggal Penetapan Rapor Semester Genap', '24 Juni 2026'],
    ['Pembagian Rapor Semester Genap', '26 Juni 2026'],
    ['Libur Akhir Tahun Pelajaran', '29 Juni - 10 Juli 2026']
  ]
};
for (const id in agendas) {
  for (const [label, date] of agendas[id]) {
    const row = document.createElement('div');
    if ((label + date).includes('\n')) row.className = 'tall';
    const a = document.createElement('span');
    const b = document.createElement('span');
    a.textContent = label;
    b.textContent = ': ' + date;
    if (date.includes('–')) a.className = 'center';
    row.append(a, b);
    document.getElementById(id).append(row);
  }
}
```
